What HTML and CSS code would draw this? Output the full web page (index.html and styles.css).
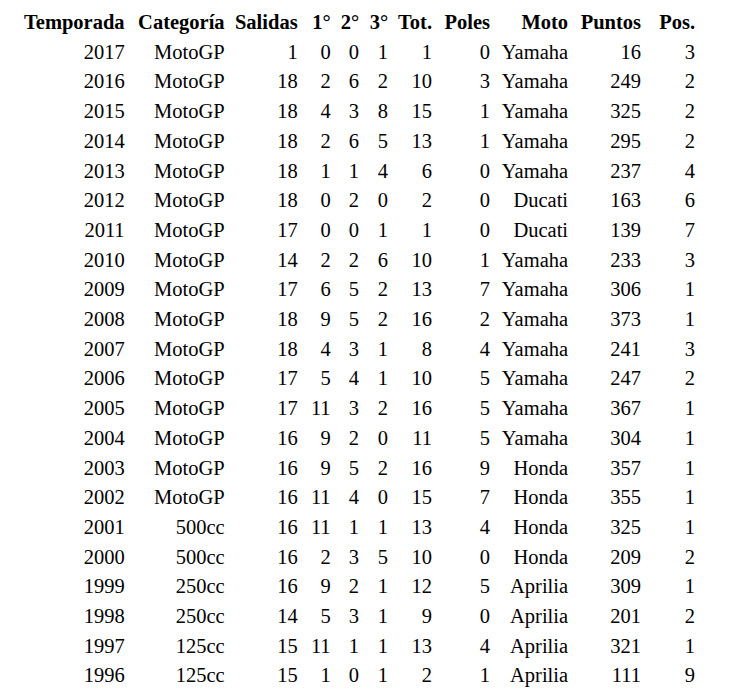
FILE: index.html
```html
<!DOCTYPE html>
<html lang="es">
<head>
<meta charset="utf-8">
<title>Temporadas</title>
<link rel="stylesheet" href="styles.css">
</head>
<body>
<table class="stats">
<thead>
<tr><th class="c-year">Temporada</th><th class="c-cat">Categoría</th><th class="c-starts">Salidas</th><th class="c-first">1°</th><th class="c-second">2°</th><th class="c-third">3°</th><th class="c-tot">Tot.</th><th class="c-poles">Poles</th><th class="c-bike">Moto</th><th class="c-pts">Puntos</th><th class="c-pos">Pos.</th></tr>
</thead>
<tbody>
<tr><td>2017</td><td>MotoGP</td><td>1</td><td>0</td><td>0</td><td>1</td><td>1</td><td>0</td><td>Yamaha</td><td>16</td><td>3</td></tr>
<tr><td>2016</td><td>MotoGP</td><td>18</td><td>2</td><td>6</td><td>2</td><td>10</td><td>3</td><td>Yamaha</td><td>249</td><td>2</td></tr>
<tr><td>2015</td><td>MotoGP</td><td>18</td><td>4</td><td>3</td><td>8</td><td>15</td><td>1</td><td>Yamaha</td><td>325</td><td>2</td></tr>
<tr><td>2014</td><td>MotoGP</td><td>18</td><td>2</td><td>6</td><td>5</td><td>13</td><td>1</td><td>Yamaha</td><td>295</td><td>2</td></tr>
<tr><td>2013</td><td>MotoGP</td><td>18</td><td>1</td><td>1</td><td>4</td><td>6</td><td>0</td><td>Yamaha</td><td>237</td><td>4</td></tr>
<tr><td>2012</td><td>MotoGP</td><td>18</td><td>0</td><td>2</td><td>0</td><td>2</td><td>0</td><td>Ducati</td><td>163</td><td>6</td></tr>
<tr><td>2011</td><td>MotoGP</td><td>17</td><td>0</td><td>0</td><td>1</td><td>1</td><td>0</td><td>Ducati</td><td>139</td><td>7</td></tr>
<tr><td>2010</td><td>MotoGP</td><td>14</td><td>2</td><td>2</td><td>6</td><td>10</td><td>1</td><td>Yamaha</td><td>233</td><td>3</td></tr>
<tr><td>2009</td><td>MotoGP</td><td>17</td><td>6</td><td>5</td><td>2</td><td>13</td><td>7</td><td>Yamaha</td><td>306</td><td>1</td></tr>
<tr><td>2008</td><td>MotoGP</td><td>18</td><td>9</td><td>5</td><td>2</td><td>16</td><td>2</td><td>Yamaha</td><td>373</td><td>1</td></tr>
<tr><td>2007</td><td>MotoGP</td><td>18</td><td>4</td><td>3</td><td>1</td><td>8</td><td>4</td><td>Yamaha</td><td>241</td><td>3</td></tr>
<tr><td>2006</td><td>MotoGP</td><td>17</td><td>5</td><td>4</td><td>1</td><td>10</td><td>5</td><td>Yamaha</td><td>247</td><td>2</td></tr>
<tr><td>2005</td><td>MotoGP</td><td>17</td><td>11</td><td>3</td><td>2</td><td>16</td><td>5</td><td>Yamaha</td><td>367</td><td>1</td></tr>
<tr><td>2004</td><td>MotoGP</td><td>16</td><td>9</td><td>2</td><td>0</td><td>11</td><td>5</td><td>Yamaha</td><td>304</td><td>1</td></tr>
<tr><td>2003</td><td>MotoGP</td><td>16</td><td>9</td><td>5</td><td>2</td><td>16</td><td>9</td><td>Honda</td><td>357</td><td>1</td></tr>
<tr><td>2002</td><td>MotoGP</td><td>16</td><td>11</td><td>4</td><td>0</td><td>15</td><td>7</td><td>Honda</td><td>355</td><td>1</td></tr>
<tr><td>2001</td><td>500cc</td><td>16</td><td>11</td><td>1</td><td>1</td><td>13</td><td>4</td><td>Honda</td><td>325</td><td>1</td></tr>
<tr><td>2000</td><td>500cc</td><td>16</td><td>2</td><td>3</td><td>5</td><td>10</td><td>0</td><td>Honda</td><td>209</td><td>2</td></tr>
<tr><td>1999</td><td>250cc</td><td>16</td><td>9</td><td>2</td><td>1</td><td>12</td><td>5</td><td>Aprilia</td><td>309</td><td>1</td></tr>
<tr><td>1998</td><td>250cc</td><td>14</td><td>5</td><td>3</td><td>1</td><td>9</td><td>0</td><td>Aprilia</td><td>201</td><td>2</td></tr>
<tr><td>1997</td><td>125cc</td><td>15</td><td>11</td><td>1</td><td>1</td><td>13</td><td>4</td><td>Aprilia</td><td>321</td><td>1</td></tr>
<tr><td>1996</td><td>125cc</td><td>15</td><td>1</td><td>0</td><td>1</td><td>2</td><td>1</td><td>Aprilia</td><td>111</td><td>9</td></tr>
</tbody>
</table>
</body>
</html>
```
FILE: styles.css
```css
html, body {
  background: #ffffff;
}
body {
  margin: 8px;
  font-family: "Liberation Serif", "Times New Roman", serif;
  font-size: 20.5px;
  color: #000000;
}
.stats {
  border-collapse: separate;
  border-spacing: 2px;
  margin-left: 10px;
  margin-top: -1px;
}
.stats th,
.stats td {
  text-align: right;
  padding: 2px 4px;
  line-height: 23.7px;
  white-space: nowrap;
}
.stats th {
  font-weight: bold;
}
.c-year { width: 100px; }
.c-cat { width: 90px; }
.c-starts { width: 63px; }
.c-first { width: 23px; }
.c-second { width: 18px; }
.c-third { width: 19px; }
.c-tot { width: 34px; }
.c-poles { width: 48px; }
.c-bike { width: 68px; }
.c-pts { width: 63px; }
.c-pos { width: 44px; }
```
